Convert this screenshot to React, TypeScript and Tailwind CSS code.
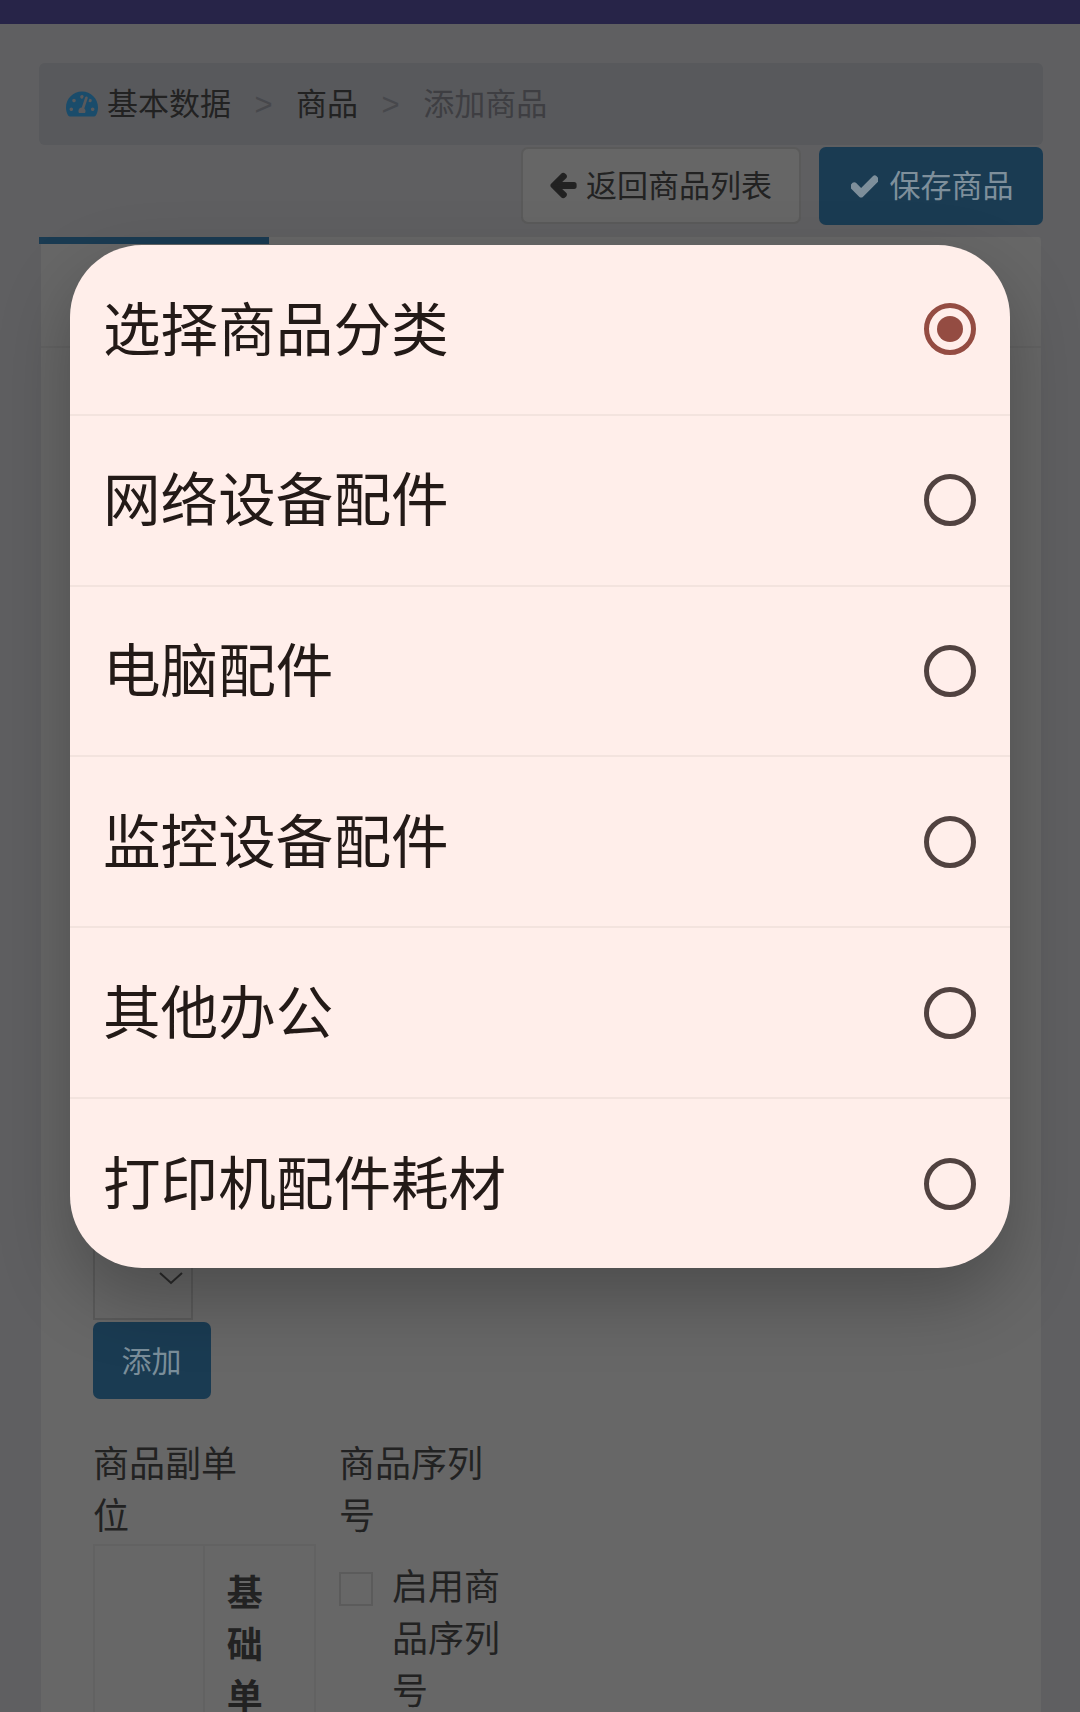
import React from "react";
import { FaArrowLeft, FaCheck, FaTachometerAlt } from "react-icons/fa";

const options = ["选择商品分类", "网络设备配件", "电脑配件", "监控设备配件", "其他办公", "打印机配件耗材"];

function Radio({ selected }: { selected: boolean }) {
  if (selected) {
    return (
      <span className="flex h-[52px] w-[52px] shrink-0 items-center justify-center rounded-full border-[5px] border-[#944c42]">
        <span className="h-[26px] w-[26px] rounded-full bg-[#944c42]" />
      </span>
    );
  }
  return <span className="h-[52px] w-[52px] shrink-0 rounded-full border-[5px] border-[#514240]" />;
}

export default function App() {
  return (
    <div className="relative h-[1712px] w-[1080px] overflow-hidden bg-[#5f5f61] font-['Noto_Sans_CJK_SC',sans-serif] text-[36px] leading-[52px] text-[#222222]">
      <header className="h-6 bg-[#272448]" />

      <main className="pl-[39px] pr-[37px] pt-[39px]">
        <nav className="flex h-[82px] items-center gap-[23.5px] rounded-[6px] bg-[#58595c] pl-[27px] text-[31px] leading-none">
          <span className="flex items-center gap-[9px]">
            <FaTachometerAlt className="text-[32px] text-[#1a4c6b]" />
            <span className="pb-[6px]">基本数据</span>
          </span>
          <span className="font-['Liberation_Sans',sans-serif] text-[31px] font-light text-[#47484c]">&gt;</span>
          <span className="pb-[6px]">商品</span>
          <span className="font-['Liberation_Sans',sans-serif] text-[31px] font-light text-[#47484c]">&gt;</span>
          <span className="pb-[6px] text-[#3e3e42]">添加商品</span>
        </nav>

        <div className="mt-[2px] flex justify-end gap-[18px]">
          <button className="flex h-[77px] w-[280px] items-center justify-center gap-[9px] rounded-[7px] border-2 border-[#5a5a5a] bg-[#666666] text-[31px] leading-none text-[#222222]">
            <FaArrowLeft className="stroke-current stroke-[50] text-[27px]" />
            <span className="pb-[4px]">返回商品列表</span>
          </button>
          <button className="flex h-[78px] w-[224px] items-center justify-center gap-[12px] rounded-[7px] bg-[#1a3b52] pl-[2px] text-[31px] leading-none text-[#7e8f9b]">
            <FaCheck className="stroke-current stroke-[40] text-[27px]" />
            <span className="pb-[5px]">保存商品</span>
          </button>
        </div>

        <section className="mt-[12px] h-[1500px] rounded-t-[4px] border-x-2 border-[#5f5f61] bg-[#676767]">
          <div className="h-[111px] border-b-2 border-[#626262]">
            <div className="-ml-[2px] h-[7px] w-[230px] bg-[#1a3b52]" />
          </div>

          <div className="px-[52px]">
            <div className="mt-[860px] flex h-[112px] w-[100px] items-end justify-end border-2 border-t-0 border-[#5a5a5a] pb-[33px] pr-[8px]">
              <svg width="24" height="14" viewBox="0 0 24 14" fill="none" stroke="#2a2a2a" strokeWidth="2">
                <path d="M1 2l11 10L23 2" />
              </svg>
            </div>
            <button className="mt-[2px] block h-[77px] w-[118px] rounded-[7px] bg-[#1a3b52] pb-[3px] pr-[1px] text-[30px] leading-none text-[#7a8e9a]">
              添加
            </button>

            <div className="mt-[36px] flex">
              <div className="w-[246px]">
                <div className="w-[160px]">商品副单位</div>
                <div className="mt-[5px] flex h-[300px] w-[223px] border-2 border-[#626262]">
                  <div className="w-[111px] border-r-2 border-[#626262]" />
                  <div className="w-[110px] pl-[22px] pr-[24px] pt-[18px] font-bold">基础单</div>
                </div>
              </div>
              <div>
                <div className="w-[160px]">商品序列号</div>
                <div className="mt-[19px] flex">
                  <span className="mt-[14px] h-[34px] w-[34px] shrink-0 border-2 border-[#5b5b5b]" />
                  <div className="ml-[19px] w-[112px]">启用商品序列号</div>
                </div>
              </div>
            </div>
          </div>
        </section>
      </main>

      <div className="absolute left-[70px] top-[245px] flex h-[1023px] w-[940px] flex-col overflow-hidden rounded-[72px] bg-[#ffeeea] text-[57.6px] leading-none text-[#231a17] shadow-[0_30px_70px_rgba(0,0,0,0.26)]">
        {options.map((label, i) => (
          <div
            key={label}
            className={
              i < options.length - 1
                ? "flex flex-1 items-center justify-between border-b-2 border-[#f3e3de] pl-[33px] pr-[34px]"
                : "flex flex-1 items-center justify-between pl-[33px] pr-[34px]"
            }
          >
            <span className="pb-[6px]">{label}</span>
            <Radio selected={i === 0} />
          </div>
        ))}
      </div>
    </div>
  );
}
